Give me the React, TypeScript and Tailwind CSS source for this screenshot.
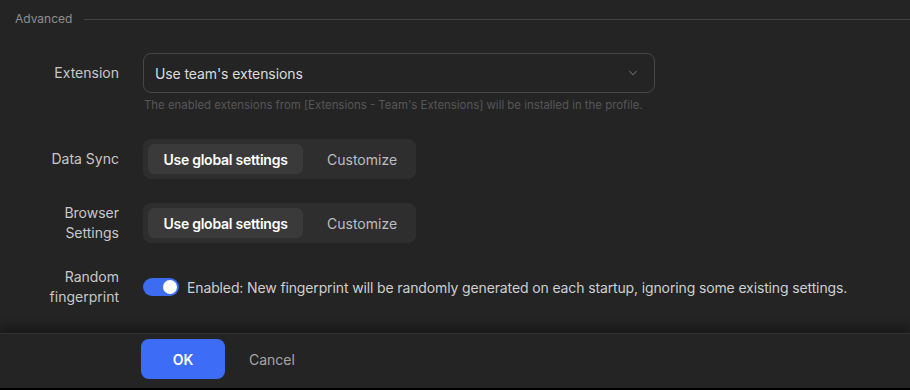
import React from "react";
import { ChevronDown } from "lucide-react";

function Segmented() {
  return (
    <div className="flex h-[40px] w-[273px] items-center rounded-lg bg-[#2e2e2e] p-[5px]">
      <div className="flex h-[30px] w-[155px] items-center justify-center rounded-md bg-[#3a3a3a] text-[14px] font-semibold tracking-[-0.25px] text-white">
        Use global settings
      </div>
      <div className="flex h-[30px] flex-1 items-center pl-[24px] text-[14px] text-[#bdbdbd]">
        Customize
      </div>
    </div>
  );
}

function Label({ children }: { children: React.ReactNode }) {
  return (
    <div className="ml-[39px] w-[80px] shrink-0 text-right text-[14px] leading-[20px] text-[#c8c8c8]">
      {children}
    </div>
  );
}

export default function App() {
  return (
    <div
      className="flex h-[390px] w-[910px] flex-col overflow-hidden bg-[#242424]"
      style={{ fontFamily: "Inter, 'Noto Sans', sans-serif" }}
    >
      <div className="flex-1 pt-[11px]">
        <div className="flex items-center pl-[15px]">
          <span className="text-[12px] leading-[16px] text-[#8f8f8f]">Advanced</span>
          <div className="ml-[12px] h-px flex-1 bg-[#424242]" />
        </div>

        <div className="mt-[26px] flex flex-col gap-[24px]">
          <div className="flex flex-col">
            <div className="flex items-center gap-[24px]">
              <Label>Extension</Label>
              <div className="flex h-[40px] w-[512px] items-center justify-between rounded-lg border border-[#474747] pl-[11px] pr-[14px]">
                <span className="text-[14px] tracking-[-0.1px] text-[#dcdcdc]">Use team's extensions</span>
                <ChevronDown size={14} strokeWidth={1.75} className="text-[#6f6f6f]" />
              </div>
            </div>
            <div className="ml-[144px] mt-[4px] text-[11.4px] leading-[16px] text-[#575757]">
              The enabled extensions from [Extensions - Team's Extensions] will be installed in the profile.
            </div>
          </div>

          <div className="mt-[2px] flex items-center gap-[24px]">
            <Label>Data Sync</Label>
            <Segmented />
          </div>

          <div className="flex items-center gap-[24px]">
            <Label>Browser Settings</Label>
            <Segmented />
          </div>

          <div className="flex items-center gap-[24px]">
            <Label>Random fingerprint</Label>
            <div className="flex items-center gap-[8px]">
              <div className="flex h-[18px] w-[36px] items-center justify-end rounded-full bg-[#3b6cf2] pr-[2px]">
                <div className="h-[14px] w-[14px] rounded-full bg-white" />
              </div>
              <span className="text-[14px] tracking-[-0.13px] text-[#cfcfcf]">
                Enabled: New fingerprint will be randomly generated on each startup, ignoring some existing settings.
              </span>
            </div>
          </div>
        </div>
      </div>

      <div className="flex h-[55px] shrink-0 items-start gap-[24px] border-t border-[#303030] bg-[#242424] pl-[141px] pt-[5px] shadow-[0_-6px_10px_rgba(0,0,0,0.35)]">
        <div className="flex h-[40px] w-[84px] items-center justify-center rounded-lg bg-[#3d6cf7] text-[14px] font-semibold text-white">
          OK
        </div>
        <div className="flex h-[40px] items-center text-[14px] text-[#a6a6a6]">Cancel</div>
      </div>
      <div className="h-[2px] shrink-0 bg-black" />
    </div>
  );
}
